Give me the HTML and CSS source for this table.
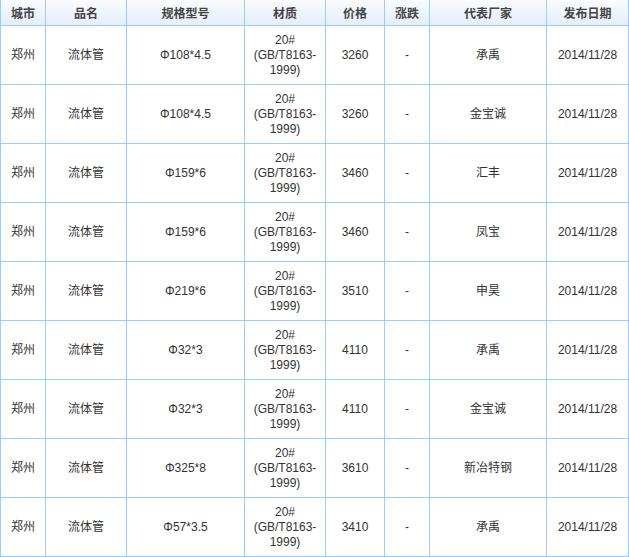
FILE: index.html
```html
<!DOCTYPE html>
<html lang="zh-CN">
<head>
<meta charset="utf-8">
<title>流体管价格</title>
<link rel="stylesheet" href="styles.css">
</head>
<body>
<div class="grid" role="table">
  <div class="h">城市</div><div class="h">品名</div><div class="h">规格型号</div><div class="h">材质</div><div class="h">价格</div><div class="h">涨跌</div><div class="h">代表厂家</div><div class="h">发布日期</div>

  <div class="c">郑州</div><div class="c">流体管</div><div class="c">Φ108*4.5</div><div class="c m">20# (GB/T8163-1999)</div><div class="c">3260</div><div class="c">-</div><div class="c">承禹</div><div class="c">2014/11/28</div>
  <div class="c">郑州</div><div class="c">流体管</div><div class="c">Φ108*4.5</div><div class="c m">20# (GB/T8163-1999)</div><div class="c">3260</div><div class="c">-</div><div class="c">金宝诚</div><div class="c">2014/11/28</div>
  <div class="c">郑州</div><div class="c">流体管</div><div class="c">Φ159*6</div><div class="c m">20# (GB/T8163-1999)</div><div class="c">3460</div><div class="c">-</div><div class="c">汇丰</div><div class="c">2014/11/28</div>
  <div class="c">郑州</div><div class="c">流体管</div><div class="c">Φ159*6</div><div class="c m">20# (GB/T8163-1999)</div><div class="c">3460</div><div class="c">-</div><div class="c">凤宝</div><div class="c">2014/11/28</div>
  <div class="c">郑州</div><div class="c">流体管</div><div class="c">Φ219*6</div><div class="c m">20# (GB/T8163-1999)</div><div class="c">3510</div><div class="c">-</div><div class="c">申昊</div><div class="c">2014/11/28</div>
  <div class="c">郑州</div><div class="c">流体管</div><div class="c">Φ32*3</div><div class="c m">20# (GB/T8163-1999)</div><div class="c">4110</div><div class="c">-</div><div class="c">承禹</div><div class="c">2014/11/28</div>
  <div class="c">郑州</div><div class="c">流体管</div><div class="c">Φ32*3</div><div class="c m">20# (GB/T8163-1999)</div><div class="c">4110</div><div class="c">-</div><div class="c">金宝诚</div><div class="c">2014/11/28</div>
  <div class="c">郑州</div><div class="c">流体管</div><div class="c">Φ325*8</div><div class="c m">20# (GB/T8163-1999)</div><div class="c">3610</div><div class="c">-</div><div class="c">新冶特钢</div><div class="c">2014/11/28</div>
  <div class="c">郑州</div><div class="c">流体管</div><div class="c">Φ57*3.5</div><div class="c m">20# (GB/T8163-1999)</div><div class="c">3410</div><div class="c">-</div><div class="c">承禹</div><div class="c">2014/11/28</div>
</div>
</body>
</html>
```
FILE: styles.css
```css
html, body {
  margin: 0;
  padding: 0;
  background: #ffffff;
}
.grid {
  width: 627px;
  display: grid;
  grid-template-columns: 44px 80px 117px 80px 58px 44px 116px 81px;
  grid-template-rows: 25px repeat(9, 58px);
  gap: 1px;
  background: #99ccff;
  border: 1px solid #99ccff;
  border-top: none;
  font-family: "Liberation Sans", "Noto Sans CJK SC", sans-serif;
  font-size: 12px;
}
.h {
  display: flex;
  align-items: center;
  justify-content: center;
  background: linear-gradient(#fbfdff 0%, #f3f7fe 30%, #e5eefc 100%);
  color: #444444;
  font-weight: bold;
  font-family: "Noto Sans CJK SC", sans-serif;
  font-size: 12px;
}
.c {
  display: flex;
  align-items: center;
  justify-content: center;
  text-align: center;
  background: #ffffff;
  color: #333333;
  line-height: 15px;
}
.m {
  padding: 0 6px;
}
```
